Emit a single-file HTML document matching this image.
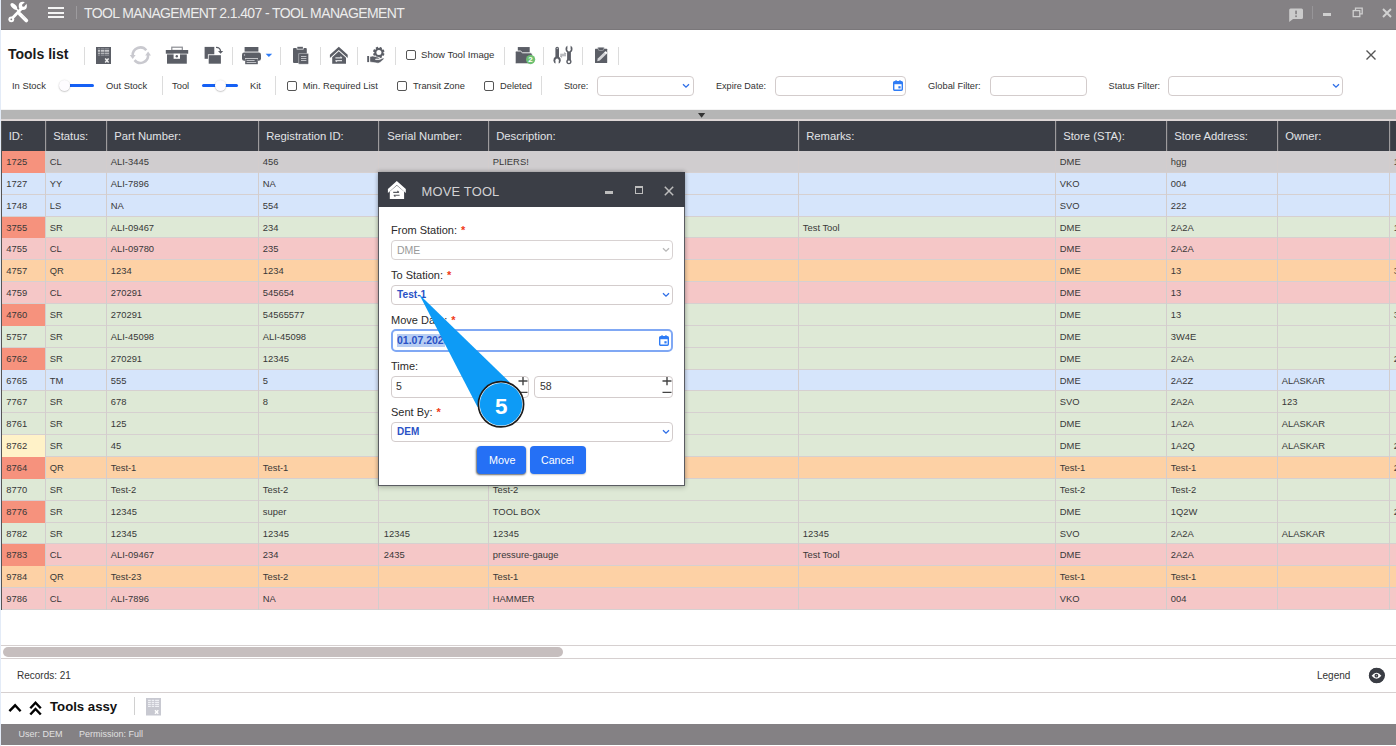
<!DOCTYPE html>
<html><head><meta charset="utf-8"><style>
*{box-sizing:border-box;margin:0;padding:0}
html,body{width:1396px;height:746px;overflow:hidden;background:#fff;font-family:"Liberation Sans", sans-serif;position:relative}
.ab{position:absolute}
.t{position:absolute;white-space:nowrap;line-height:1}
.sep{position:absolute;width:1px;background:#dcdcdc}
.cb{position:absolute;width:10px;height:10px;border:1.3px solid #555;border-radius:2px;background:#fff}
.inp{position:absolute;border:1px solid #d3cccc;border-radius:4px;background:#fff}
.hd{position:absolute;top:121px;height:30px;background:#3b3e46}
.cell{position:absolute;white-space:nowrap;font-size:9.4px;color:#383838;line-height:1}
</style></head><body>

<div class="ab" style="left:0;top:0;width:1px;height:746px;background:#e3ebf7"></div>
<div class="ab" style="left:1px;top:0;width:1395px;height:30px;background:#848184"></div>
<div class="ab" style="left:1px;top:29px;width:1395px;height:1px;background:#7a777a"></div>
<div class="t" style="left:84px;top:5px;font-size:14px;letter-spacing:-0.62px;color:#ececec;line-height:16px">TOOL MANAGEMENT 2.1.407 - TOOL MANAGEMENT</div>
<svg class="ab" style="left:4px;top:0px" width="30" height="26" viewBox="0 0 30 26"><ellipse cx="9.8" cy="6.3" rx="4.1" ry="2.1" transform="rotate(45 9.8 6.3)" fill="#fff"/><line x1="11" y1="7.5" x2="15" y2="11.5" stroke="#fff" stroke-width="1.6"/><line x1="15.8" y1="14" x2="22.3" y2="20.5" stroke="#fff" stroke-width="3.8" stroke-linecap="round"/><line x1="7.3" y1="19.3" x2="17.8" y2="8.2" stroke="#fff" stroke-width="2.8"/><circle cx="7.3" cy="19.3" r="2.9" fill="#fff"/><circle cx="7.3" cy="19.3" r="0.9" fill="#848184"/><circle cx="18.8" cy="5.9" r="4.1" fill="#fff"/><path d="M20.3 6.3L18.45 4.45L22.1 0.7L23.95 2.55Z" fill="#848184"/><circle cx="19.4" cy="5.4" r="1.3" fill="#848184"/><path d="M18 15.5L21 18.5" stroke="#ddd" stroke-width="0.7"/></svg>
<div class="ab" style="left:48px;top:7px;width:16px;height:2px;background:#f4f4f4"></div>
<div class="ab" style="left:48px;top:11.6px;width:16px;height:2px;background:#f4f4f4"></div>
<div class="ab" style="left:48px;top:16px;width:16px;height:2px;background:#f4f4f4"></div>
<div class="ab" style="left:76px;top:6px;width:1px;height:13px;background:#9d9b9e"></div>
<svg class="ab" style="left:1288px;top:7px" width="16" height="16" viewBox="0 0 16 16"><path d="M2.5 1.5H13.5Q15 1.5 15 3V10.5Q15 12 13.5 12H5L1.2 15V3Q1.2 1.5 2.5 1.5Z" fill="#cbcbcb"/><rect x="7.2" y="3.6" width="1.7" height="3.6" fill="#858386"/><rect x="7.2" y="8.4" width="1.7" height="1.7" fill="#858386"/></svg>
<div class="ab" style="left:1312px;top:6px;width:1px;height:13px;background:#979598"></div>
<div class="ab" style="left:1323px;top:13px;width:8px;height:3px;background:#cfcfcf"></div>
<svg class="ab" style="left:1352px;top:7px" width="12" height="11" viewBox="0 0 12 11"><path d="M3.5 3V1.2H10.2V6.8H8" fill="none" stroke="#cfcfcf" stroke-width="1.3"/><rect x="1.2" y="3.6" width="6.6" height="6" fill="none" stroke="#cfcfcf" stroke-width="1.3"/></svg>
<svg class="ab" style="left:1382px;top:8px" width="10" height="10" viewBox="0 0 10 10"><path d="M1 1L9 9M9 1L1 9" stroke="#d2d2d2" stroke-width="1.9"/></svg>
<div class="t" style="left:8px;top:46px;font-size:14px;font-weight:bold;color:#1b1b1b;line-height:16px">Tools list</div>
<div class="sep" style="left:84px;top:47px;height:18px"></div>
<div class="sep" style="left:232px;top:47px;height:18px"></div>
<div class="sep" style="left:280px;top:47px;height:18px"></div>
<div class="sep" style="left:320px;top:47px;height:18px"></div>
<div class="sep" style="left:357px;top:47px;height:18px"></div>
<div class="sep" style="left:395px;top:47px;height:18px"></div>
<div class="sep" style="left:504px;top:47px;height:18px"></div>
<div class="sep" style="left:543px;top:47px;height:18px"></div>
<div class="sep" style="left:582px;top:47px;height:18px"></div>
<div class="sep" style="left:618px;top:47px;height:18px"></div>
<svg class="ab" style="left:96px;top:47px" width="15" height="17" viewBox="0 0 15 17"><rect width="15" height="17" fill="#5b5e66"/><rect x="1.9" y="1.2" width="11.2" height="1.3" fill="#8d9096"/><rect x="1.9" y="3.2" width="11.2" height="1.4" fill="#e2e3e5"/><rect x="1.9" y="5.6" width="11.2" height="1.5" fill="#b3b5b9"/><rect x="1.9" y="7.6" width="11.2" height="1.2" fill="#8d9096"/><rect x="4.2" y="1" width="0.7" height="8" fill="#5b5e66"/><rect x="8.2" y="1" width="0.5" height="8" fill="#5b5e66"/><path d="M9.2 11.6L12.6 15.4M12.6 11.6L9.2 15.4" stroke="#f0f0f0" stroke-width="1.5"/></svg>
<svg class="ab" style="left:128px;top:44px" width="24" height="22" viewBox="0 0 24 22"><path d="M4.7 11.6A7.7 7.7 0 0 1 18.3 6.25" fill="none" stroke="#c9c9cf" stroke-width="2.5"/><path d="M20.1 10.8A7.7 7.7 0 0 1 6.5 16.15" fill="none" stroke="#c9c9cf" stroke-width="2.5"/><path d="M1.8 11H7.6L4.7 15Z" fill="#c9c9cf"/><path d="M17.2 11.4H23L20.1 7.4Z" fill="#c9c9cf"/></svg>
<svg class="ab" style="left:165px;top:46px" width="24" height="18" viewBox="0 0 24 18"><rect x="6.8" y="1.2" width="10.5" height="3.2" fill="none" stroke="#8a8c92" stroke-width="1.2"/><rect x="0.8" y="4" width="22.4" height="3.7" fill="#5b5e66"/><rect x="2" y="8.4" width="19.8" height="9.3" fill="#5b5e66"/><rect x="8.6" y="7.7" width="6.4" height="5.1" fill="#fff"/><circle cx="11.8" cy="10.3" r="1.2" fill="#5b5e66"/></svg>
<svg class="ab" style="left:204px;top:46px" width="20" height="18" viewBox="0 0 20 18"><rect x="0.6" y="0.9" width="9.7" height="11.9" fill="#5b5e66"/><rect x="3.9" y="8.3" width="13.6" height="9.7" fill="#fff"/><rect x="4.7" y="9.2" width="12.2" height="8.5" fill="#5b5e66"/><path d="M12 1.3Q16.4 1.3 16.6 5.4" fill="none" stroke="#5b5e66" stroke-width="1.3"/><path d="M14 5L19.2 5L16.6 7.8Z" fill="#5b5e66"/></svg>
<svg class="ab" style="left:242px;top:46px" width="32" height="19" viewBox="0 0 32 19"><rect x="2.6" y="1" width="13.8" height="4.6" fill="#5b5e66"/><rect x="0" y="6.6" width="19" height="8.2" rx="2.2" fill="#5b5e66"/><rect x="3" y="12.2" width="13" height="6" fill="#fff"/><rect x="3.2" y="12.8" width="12.6" height="5.4" fill="#5b5e66"/><g fill="#c9cbd0"><rect x="4.6" y="14" width="8" height="0.9"/><rect x="4.6" y="16" width="9.6" height="0.9"/></g><circle cx="2.5" cy="9" r="0.7" fill="#c9cbd0"/><path d="M23.6 7.8H30.2L26.9 11Z" fill="#2f7cf6"/></svg>
<svg class="ab" style="left:292px;top:46px" width="18" height="19" viewBox="0 0 18 19"><rect x="1" y="2" width="13.8" height="15" rx="1" fill="#5b5e66"/><rect x="4.6" y="0.3" width="7" height="3.2" rx="0.6" fill="#fff"/><rect x="5.3" y="0.8" width="5.6" height="2" fill="#5b5e66"/><rect x="6.3" y="7.2" width="10.2" height="11" rx="0.6" fill="#a9abb0"/><rect x="7.1" y="8" width="9" height="9.8" rx="0.5" fill="#5b5e66"/><g fill="#c9cbd0"><rect x="9" y="10" width="5.4" height="0.9"/><rect x="9" y="12" width="5.4" height="0.9"/><rect x="9" y="14" width="5.4" height="0.9"/></g></svg>
<svg class="ab" style="left:329px;top:46px" width="20" height="19" viewBox="0 0 20 19"><path d="M0.9 8.8L9.8 0.8L18.7 8.8V12L9.8 4L0.9 12Z" fill="#5b5e66"/><path d="M3.2 17.7V11.3L9.8 5.3L17 11.8V17.7Z" fill="#5b5e66"/><path d="M6.4 11.9H13M11.4 10.6L13 11.9M13 14.6H6.4M8 15.9L6.4 14.6" stroke="#dcdde0" stroke-width="1.1"/></svg>
<svg class="ab" style="left:364px;top:44px" width="24" height="22" viewBox="0 0 24 22"><rect x="13.65" y="2.95" width="2.5" height="11.6" rx="0.5" transform="rotate(22.5 14.9 8.6)" fill="#5b5e66"/><rect x="13.65" y="2.95" width="2.5" height="11.6" rx="0.5" transform="rotate(67.5 14.9 8.6)" fill="#5b5e66"/><rect x="13.65" y="2.95" width="2.5" height="11.6" rx="0.5" transform="rotate(112.5 14.9 8.6)" fill="#5b5e66"/><rect x="13.65" y="2.95" width="2.5" height="11.6" rx="0.5" transform="rotate(157.5 14.9 8.6)" fill="#5b5e66"/><circle cx="14.9" cy="8.6" r="4.5" fill="#5b5e66"/><circle cx="14.9" cy="8.6" r="2.5" fill="#fff"/><rect x="3.2" y="12" width="1.8" height="6.1" fill="#5b5e66"/><path d="M5.8 12.6Q8.5 11.6 11.2 12.4L14.9 13.6Q16 14.2 15.2 15L11.6 15L11.6 15.6L15.6 15.6L19 14Q20.6 13.6 20 15L16 18.6Q14.6 19.4 12.8 19.1L5.8 18Z" fill="#5b5e66" stroke="#fff" stroke-width="0.6"/></svg>
<div class="cb" style="left:406px;top:50px"></div>
<div class="t" style="left:421px;top:49px;font-size:9.6px;color:#333;line-height:12px">Show Tool Image</div>
<svg class="ab" style="left:514px;top:46px" width="22" height="19" viewBox="0 0 22 19"><rect x="3.8" y="1.05" width="11.9" height="7" fill="#5b5e66"/><path d="M1.2 6.4Q1.2 5 2.6 5H6.4L8.6 6.8H16.8Q18.3 6.8 18.3 8.3V16.4Q18.3 17.8 16.9 17.8H2.6Q1.2 17.8 1.2 16.4Z" fill="#5b5e66" stroke="#fff" stroke-width="0.9"/><circle cx="16.6" cy="13.6" r="4.6" fill="#6ec172"/><text x="16.6" y="16.4" font-family="Liberation Sans" font-weight="bold" font-size="8" fill="#fff" text-anchor="middle">2</text></svg>
<svg class="ab" style="left:550px;top:44px" width="26" height="22" viewBox="0 0 26 22"><rect x="5.4" y="2.8" width="3.6" height="13" rx="1.8" fill="#5b5e66"/><circle cx="7.2" cy="4.5" r="0.65" fill="#c9cbd0"/><circle cx="7.1" cy="16.2" r="3.6" fill="#5b5e66"/><rect x="5.5" y="16" width="3.2" height="5" fill="#fff"/><circle cx="7.1" cy="16.1" r="1.6" fill="#fff"/><rect x="17.1" y="5" width="3.8" height="12" fill="#5b5e66"/><circle cx="19" cy="4.9" r="3.5" fill="#5b5e66"/><rect x="17.4" y="0" width="3.2" height="5.8" fill="#fff"/><circle cx="19" cy="5.8" r="1.6" fill="#fff"/><circle cx="18.9" cy="17.6" r="2.6" fill="#5b5e66"/><circle cx="18.9" cy="17.8" r="1.2" fill="#fff"/><path d="M10.2 10.2H16M14.2 8.6L16 10.2M16 11.8H10.2M12 13.4L10.2 11.8" stroke="#a3a5aa" stroke-width="1.1"/></svg>
<svg class="ab" style="left:594px;top:46px" width="15" height="18" viewBox="0 0 15 18"><rect x="1" y="2.8" width="12.2" height="14.1" rx="0.5" fill="#5b5e66"/><path d="M3.6 1.2H10.3V2.6Q10.3 4.8 8.2 4.8H5.7Q3.6 4.8 3.6 2.6Z" fill="#a9abb0"/><path d="M4.4 1.8H9.5V2.7Q9.5 4 8.2 4H5.7Q4.4 4 4.4 2.7Z" fill="#5b5e66"/><path d="M3.2 15.2L3.8 12.6L10 6.4L12 8.4L5.8 14.6Z" fill="#d6d7da"/><path d="M10 6.4L11 5.4Q11.6 4.9 12.2 5.5L12.9 6.2Q13.4 6.8 12.9 7.4L12 8.4Z" fill="#fff"/></svg>
<svg class="ab" style="left:1366px;top:50px" width="10" height="10" viewBox="0 0 10 10"><path d="M0.5 0.5L9.5 9.5M9.5 0.5L0.5 9.5" stroke="#555" stroke-width="1.4"/></svg>
<div class="t" style="left:12px;top:80px;font-size:9.4px;color:#333;line-height:12px">In Stock</div>
<div class="ab" style="left:70px;top:84px;width:24px;height:3px;border-radius:0 2px 2px 0;background:#1560f5"></div>
<div class="ab" style="left:58.6px;top:80px;width:11.4px;height:11.4px;border-radius:50%;background:#fefcff;box-shadow:0 0.5px 1.5px rgba(0,0,0,.35)"></div>
<div class="t" style="left:106px;top:80px;font-size:9.4px;color:#333;line-height:12px">Out Stock</div>
<div class="sep" style="left:162px;top:76px;height:19px"></div>
<div class="t" style="left:172px;top:80px;font-size:9.4px;color:#333;line-height:12px">Tool</div>
<div class="ab" style="left:202px;top:84px;width:35.5px;height:3px;border-radius:2px;background:#1560f5"></div>
<div class="ab" style="left:214.5px;top:80px;width:11.4px;height:11.4px;border-radius:50%;background:#fefcff;box-shadow:0 0.5px 1.5px rgba(0,0,0,.35)"></div>
<div class="t" style="left:250px;top:80px;font-size:9.4px;color:#333;line-height:12px">Kit</div>
<div class="sep" style="left:275px;top:76px;height:19px"></div>
<div class="cb" style="left:287px;top:81px"></div>
<div class="t" style="left:302.8px;top:80px;font-size:9.3px;color:#333;line-height:12px">Min. Required List</div>
<div class="cb" style="left:397.4px;top:81px"></div>
<div class="t" style="left:413px;top:80px;font-size:9.3px;color:#333;line-height:12px">Transit Zone</div>
<div class="cb" style="left:484px;top:81px"></div>
<div class="t" style="left:500px;top:80px;font-size:9.3px;color:#333;line-height:12px">Deleted</div>
<div class="sep" style="left:541px;top:76px;height:19px"></div>
<div class="t" style="left:564px;top:80px;font-size:9.1px;color:#333;line-height:12px">Store:</div>
<div class="inp" style="left:597px;top:76px;width:97px;height:19.5px"></div>
<svg class="ab" style="left:681.5px;top:83px" width="8" height="6" viewBox="0 0 8 6"><path d="M1 1.2L4 4.2L7 1.2" fill="none" stroke="#2f6fe8" stroke-width="1.3"/></svg>
<div class="t" style="left:716px;top:80px;font-size:9.1px;color:#333;line-height:12px">Expire Date:</div>
<div class="inp" style="left:775px;top:75.5px;width:131px;height:20.5px"></div>
<svg class="ab" style="left:893px;top:80px" width="10" height="11" viewBox="0 0 10 11"><rect x="0.7" y="1.8" width="8.6" height="8.5" rx="1" fill="none" stroke="#2f7cf6" stroke-width="1.4"/><rect x="0.7" y="1.8" width="8.6" height="2.4" fill="#2f7cf6"/><rect x="2.4" y="0.2" width="1.3" height="2" fill="#2f7cf6"/><rect x="6.3" y="0.2" width="1.3" height="2" fill="#2f7cf6"/><rect x="5.4" y="6.2" width="2.2" height="2.2" fill="#2f7cf6"/></svg>
<div class="t" style="left:928px;top:80px;font-size:9.3px;color:#333;line-height:12px">Global Filter:</div>
<div class="inp" style="left:990px;top:75.6px;width:97px;height:20px"></div>
<div class="t" style="left:1108.6px;top:80px;font-size:9.2px;color:#333;line-height:12px">Status Filter:</div>
<div class="inp" style="left:1168px;top:75.6px;width:175px;height:20.8px"></div>
<svg class="ab" style="left:1331.5px;top:83px" width="8" height="6" viewBox="0 0 8 6"><path d="M1 1.2L4 4.2L7 1.2" fill="none" stroke="#2f6fe8" stroke-width="1.3"/></svg>
<div class="ab" style="left:1px;top:108.5px;width:1395px;height:2px;background:linear-gradient(#fff,#cfcfcf)"></div>
<div class="ab" style="left:1px;top:110px;width:1395px;height:9px;background:#b5b5b5"></div>
<div class="ab" style="left:1px;top:119px;width:1395px;height:2px;background:#ddd6d6"></div>
<svg class="ab" style="left:698px;top:113px" width="8" height="5"><path d="M0 0H7.2L3.6 4.8Z" fill="#333"/></svg>
<div class="ab" style="left:1px;top:121px;width:1395px;height:30px;background:#3b3e46"></div>
<div class="t" style="left:8.7px;top:129.6px;font-size:11.25px;color:#e2e4e7;line-height:13px">ID:</div>
<div class="ab" style="left:45px;top:121px;width:1px;height:30px;background:#9d9b9d"></div>
<div class="ab" style="left:46px;top:121px;width:1px;height:30px;background:#4a4c53"></div>
<div class="t" style="left:53.2px;top:129.6px;font-size:11.25px;color:#e2e4e7;line-height:13px">Status:</div>
<div class="ab" style="left:106px;top:121px;width:1px;height:30px;background:#9d9b9d"></div>
<div class="ab" style="left:107px;top:121px;width:1px;height:30px;background:#4a4c53"></div>
<div class="t" style="left:114.2px;top:129.6px;font-size:11.25px;color:#e2e4e7;line-height:13px">Part Number:</div>
<div class="ab" style="left:258px;top:121px;width:1px;height:30px;background:#9d9b9d"></div>
<div class="ab" style="left:259px;top:121px;width:1px;height:30px;background:#4a4c53"></div>
<div class="t" style="left:266.2px;top:129.6px;font-size:11.25px;color:#e2e4e7;line-height:13px">Registration ID:</div>
<div class="ab" style="left:378px;top:121px;width:1px;height:30px;background:#9d9b9d"></div>
<div class="ab" style="left:379px;top:121px;width:1px;height:30px;background:#4a4c53"></div>
<div class="t" style="left:387.2px;top:129.6px;font-size:11.25px;color:#e2e4e7;line-height:13px">Serial Number:</div>
<div class="ab" style="left:488px;top:121px;width:1px;height:30px;background:#9d9b9d"></div>
<div class="ab" style="left:489px;top:121px;width:1px;height:30px;background:#4a4c53"></div>
<div class="t" style="left:496.2px;top:129.6px;font-size:11.25px;color:#e2e4e7;line-height:13px">Description:</div>
<div class="ab" style="left:798px;top:121px;width:1px;height:30px;background:#9d9b9d"></div>
<div class="ab" style="left:799px;top:121px;width:1px;height:30px;background:#4a4c53"></div>
<div class="t" style="left:806.2px;top:129.6px;font-size:11.25px;color:#e2e4e7;line-height:13px">Remarks:</div>
<div class="ab" style="left:1055px;top:121px;width:1px;height:30px;background:#9d9b9d"></div>
<div class="ab" style="left:1056px;top:121px;width:1px;height:30px;background:#4a4c53"></div>
<div class="t" style="left:1063.2px;top:129.6px;font-size:11.25px;color:#e2e4e7;line-height:13px">Store (STA):</div>
<div class="ab" style="left:1166px;top:121px;width:1px;height:30px;background:#9d9b9d"></div>
<div class="ab" style="left:1167px;top:121px;width:1px;height:30px;background:#4a4c53"></div>
<div class="t" style="left:1174.2px;top:129.6px;font-size:11.25px;color:#e2e4e7;line-height:13px">Store Address:</div>
<div class="ab" style="left:1277px;top:121px;width:1px;height:30px;background:#9d9b9d"></div>
<div class="ab" style="left:1278px;top:121px;width:1px;height:30px;background:#4a4c53"></div>
<div class="t" style="left:1285.2px;top:129.6px;font-size:11.25px;color:#e2e4e7;line-height:13px">Owner:</div>
<div class="ab" style="left:1389px;top:121px;width:1px;height:30px;background:#9d9b9d"></div>
<div class="ab" style="left:1390px;top:121px;width:1px;height:30px;background:#4a4c53"></div>
<div class="ab" style="left:1px;top:151px;width:1395px;height:22px;background:#d0cdcf;border-bottom:1px solid #d6d0d0"></div>
<div class="ab" style="left:2px;top:151px;width:43px;height:22px;background:#f6927d"></div>
<div class="cell" style="left:6.3px;top:155.6px;line-height:11px">1725</div>
<div class="cell" style="left:49.8px;top:155.6px;line-height:11px">CL</div>
<div class="cell" style="left:110.8px;top:155.6px;line-height:11px">ALI-3445</div>
<div class="cell" style="left:262.8px;top:155.6px;line-height:11px">456</div>
<div class="cell" style="left:492.8px;top:155.6px;line-height:11px">PLIERS!</div>
<div class="cell" style="left:1059.8px;top:155.6px;line-height:11px">DME</div>
<div class="cell" style="left:1170.8px;top:155.6px;line-height:11px">hgg</div>
<div class="cell" style="left:1393.8px;top:155.6px;line-height:11px">1</div>
<div class="ab" style="left:1px;top:173px;width:1395px;height:22px;background:#d6e5fb;border-bottom:1px solid #d6d0d0"></div>
<div class="cell" style="left:6.3px;top:177.6px;line-height:11px">1727</div>
<div class="cell" style="left:49.8px;top:177.6px;line-height:11px">YY</div>
<div class="cell" style="left:110.8px;top:177.6px;line-height:11px">ALI-7896</div>
<div class="cell" style="left:262.8px;top:177.6px;line-height:11px">NA</div>
<div class="cell" style="left:1059.8px;top:177.6px;line-height:11px">VKO</div>
<div class="cell" style="left:1170.8px;top:177.6px;line-height:11px">004</div>
<div class="ab" style="left:1px;top:195px;width:1395px;height:22px;background:#d6e5fb;border-bottom:1px solid #d6d0d0"></div>
<div class="cell" style="left:6.3px;top:199.6px;line-height:11px">1748</div>
<div class="cell" style="left:49.8px;top:199.6px;line-height:11px">LS</div>
<div class="cell" style="left:110.8px;top:199.6px;line-height:11px">NA</div>
<div class="cell" style="left:262.8px;top:199.6px;line-height:11px">554</div>
<div class="cell" style="left:1059.8px;top:199.6px;line-height:11px">SVO</div>
<div class="cell" style="left:1170.8px;top:199.6px;line-height:11px">222</div>
<div class="ab" style="left:1px;top:217px;width:1395px;height:21px;background:#dee9d6;border-bottom:1px solid #d6d0d0"></div>
<div class="ab" style="left:2px;top:217px;width:43px;height:21px;background:#f6927d"></div>
<div class="cell" style="left:6.3px;top:221.6px;line-height:11px">3755</div>
<div class="cell" style="left:49.8px;top:221.6px;line-height:11px">SR</div>
<div class="cell" style="left:110.8px;top:221.6px;line-height:11px">ALI-09467</div>
<div class="cell" style="left:262.8px;top:221.6px;line-height:11px">234</div>
<div class="cell" style="left:802.8px;top:221.6px;line-height:11px">Test Tool</div>
<div class="cell" style="left:1059.8px;top:221.6px;line-height:11px">DME</div>
<div class="cell" style="left:1170.8px;top:221.6px;line-height:11px">2A2A</div>
<div class="cell" style="left:1393.8px;top:221.6px;line-height:11px">1</div>
<div class="ab" style="left:1px;top:238px;width:1395px;height:22px;background:#f5c7c7;border-bottom:1px solid #d6d0d0"></div>
<div class="cell" style="left:6.3px;top:242.6px;line-height:11px">4755</div>
<div class="cell" style="left:49.8px;top:242.6px;line-height:11px">CL</div>
<div class="cell" style="left:110.8px;top:242.6px;line-height:11px">ALI-09780</div>
<div class="cell" style="left:262.8px;top:242.6px;line-height:11px">235</div>
<div class="cell" style="left:1059.8px;top:242.6px;line-height:11px">DME</div>
<div class="cell" style="left:1170.8px;top:242.6px;line-height:11px">2A2A</div>
<div class="ab" style="left:1px;top:260px;width:1395px;height:22px;background:#fdd1a5;border-bottom:1px solid #d6d0d0"></div>
<div class="cell" style="left:6.3px;top:264.6px;line-height:11px">4757</div>
<div class="cell" style="left:49.8px;top:264.6px;line-height:11px">QR</div>
<div class="cell" style="left:110.8px;top:264.6px;line-height:11px">1234</div>
<div class="cell" style="left:262.8px;top:264.6px;line-height:11px">1234</div>
<div class="cell" style="left:1059.8px;top:264.6px;line-height:11px">DME</div>
<div class="cell" style="left:1170.8px;top:264.6px;line-height:11px">13</div>
<div class="cell" style="left:1393.8px;top:264.6px;line-height:11px">3</div>
<div class="ab" style="left:1px;top:282px;width:1395px;height:22px;background:#f5c7c7;border-bottom:1px solid #d6d0d0"></div>
<div class="cell" style="left:6.3px;top:286.6px;line-height:11px">4759</div>
<div class="cell" style="left:49.8px;top:286.6px;line-height:11px">CL</div>
<div class="cell" style="left:110.8px;top:286.6px;line-height:11px">270291</div>
<div class="cell" style="left:262.8px;top:286.6px;line-height:11px">545654</div>
<div class="cell" style="left:1059.8px;top:286.6px;line-height:11px">DME</div>
<div class="cell" style="left:1170.8px;top:286.6px;line-height:11px">13</div>
<div class="ab" style="left:1px;top:304px;width:1395px;height:22px;background:#dee9d6;border-bottom:1px solid #d6d0d0"></div>
<div class="ab" style="left:2px;top:304px;width:43px;height:22px;background:#f6927d"></div>
<div class="cell" style="left:6.3px;top:308.6px;line-height:11px">4760</div>
<div class="cell" style="left:49.8px;top:308.6px;line-height:11px">SR</div>
<div class="cell" style="left:110.8px;top:308.6px;line-height:11px">270291</div>
<div class="cell" style="left:262.8px;top:308.6px;line-height:11px">54565577</div>
<div class="cell" style="left:1059.8px;top:308.6px;line-height:11px">DME</div>
<div class="cell" style="left:1170.8px;top:308.6px;line-height:11px">13</div>
<div class="cell" style="left:1393.8px;top:308.6px;line-height:11px">3</div>
<div class="ab" style="left:1px;top:326px;width:1395px;height:22px;background:#dee9d6;border-bottom:1px solid #d6d0d0"></div>
<div class="cell" style="left:6.3px;top:330.6px;line-height:11px">5757</div>
<div class="cell" style="left:49.8px;top:330.6px;line-height:11px">SR</div>
<div class="cell" style="left:110.8px;top:330.6px;line-height:11px">ALI-45098</div>
<div class="cell" style="left:262.8px;top:330.6px;line-height:11px">ALI-45098</div>
<div class="cell" style="left:1059.8px;top:330.6px;line-height:11px">DME</div>
<div class="cell" style="left:1170.8px;top:330.6px;line-height:11px">3W4E</div>
<div class="ab" style="left:1px;top:348px;width:1395px;height:22px;background:#dee9d6;border-bottom:1px solid #d6d0d0"></div>
<div class="ab" style="left:2px;top:348px;width:43px;height:22px;background:#f6927d"></div>
<div class="cell" style="left:6.3px;top:352.6px;line-height:11px">6762</div>
<div class="cell" style="left:49.8px;top:352.6px;line-height:11px">SR</div>
<div class="cell" style="left:110.8px;top:352.6px;line-height:11px">270291</div>
<div class="cell" style="left:262.8px;top:352.6px;line-height:11px">12345</div>
<div class="cell" style="left:1059.8px;top:352.6px;line-height:11px">DME</div>
<div class="cell" style="left:1170.8px;top:352.6px;line-height:11px">2A2A</div>
<div class="cell" style="left:1393.8px;top:352.6px;line-height:11px">2</div>
<div class="ab" style="left:1px;top:370px;width:1395px;height:21px;background:#d6e5fb;border-bottom:1px solid #d6d0d0"></div>
<div class="cell" style="left:6.3px;top:374.6px;line-height:11px">6765</div>
<div class="cell" style="left:49.8px;top:374.6px;line-height:11px">TM</div>
<div class="cell" style="left:110.8px;top:374.6px;line-height:11px">555</div>
<div class="cell" style="left:262.8px;top:374.6px;line-height:11px">5</div>
<div class="cell" style="left:1059.8px;top:374.6px;line-height:11px">DME</div>
<div class="cell" style="left:1170.8px;top:374.6px;line-height:11px">2A2Z</div>
<div class="cell" style="left:1281.8px;top:374.6px;line-height:11px">ALASKAR</div>
<div class="ab" style="left:1px;top:391px;width:1395px;height:22px;background:#dee9d6;border-bottom:1px solid #d6d0d0"></div>
<div class="cell" style="left:6.3px;top:395.6px;line-height:11px">7767</div>
<div class="cell" style="left:49.8px;top:395.6px;line-height:11px">SR</div>
<div class="cell" style="left:110.8px;top:395.6px;line-height:11px">678</div>
<div class="cell" style="left:262.8px;top:395.6px;line-height:11px">8</div>
<div class="cell" style="left:1059.8px;top:395.6px;line-height:11px">SVO</div>
<div class="cell" style="left:1170.8px;top:395.6px;line-height:11px">2A2A</div>
<div class="cell" style="left:1281.8px;top:395.6px;line-height:11px">123</div>
<div class="ab" style="left:1px;top:413px;width:1395px;height:22px;background:#dee9d6;border-bottom:1px solid #d6d0d0"></div>
<div class="cell" style="left:6.3px;top:417.6px;line-height:11px">8761</div>
<div class="cell" style="left:49.8px;top:417.6px;line-height:11px">SR</div>
<div class="cell" style="left:110.8px;top:417.6px;line-height:11px">125</div>
<div class="cell" style="left:1059.8px;top:417.6px;line-height:11px">DME</div>
<div class="cell" style="left:1170.8px;top:417.6px;line-height:11px">1A2A</div>
<div class="cell" style="left:1281.8px;top:417.6px;line-height:11px">ALASKAR</div>
<div class="ab" style="left:1px;top:435px;width:1395px;height:22px;background:#dee9d6;border-bottom:1px solid #d6d0d0"></div>
<div class="ab" style="left:2px;top:435px;width:43px;height:22px;background:#fff2c8"></div>
<div class="cell" style="left:6.3px;top:439.6px;line-height:11px">8762</div>
<div class="cell" style="left:49.8px;top:439.6px;line-height:11px">SR</div>
<div class="cell" style="left:110.8px;top:439.6px;line-height:11px">45</div>
<div class="cell" style="left:1059.8px;top:439.6px;line-height:11px">DME</div>
<div class="cell" style="left:1170.8px;top:439.6px;line-height:11px">1A2Q</div>
<div class="cell" style="left:1281.8px;top:439.6px;line-height:11px">ALASKAR</div>
<div class="cell" style="left:1393.8px;top:439.6px;line-height:11px">2</div>
<div class="ab" style="left:1px;top:457px;width:1395px;height:22px;background:#fdd1a5;border-bottom:1px solid #d6d0d0"></div>
<div class="ab" style="left:2px;top:457px;width:43px;height:22px;background:#f6927d"></div>
<div class="cell" style="left:6.3px;top:461.6px;line-height:11px">8764</div>
<div class="cell" style="left:49.8px;top:461.6px;line-height:11px">QR</div>
<div class="cell" style="left:110.8px;top:461.6px;line-height:11px">Test-1</div>
<div class="cell" style="left:262.8px;top:461.6px;line-height:11px">Test-1</div>
<div class="cell" style="left:1059.8px;top:461.6px;line-height:11px">Test-1</div>
<div class="cell" style="left:1170.8px;top:461.6px;line-height:11px">Test-1</div>
<div class="cell" style="left:1393.8px;top:461.6px;line-height:11px">2</div>
<div class="ab" style="left:1px;top:479px;width:1395px;height:22px;background:#dee9d6;border-bottom:1px solid #d6d0d0"></div>
<div class="cell" style="left:6.3px;top:483.6px;line-height:11px">8770</div>
<div class="cell" style="left:49.8px;top:483.6px;line-height:11px">SR</div>
<div class="cell" style="left:110.8px;top:483.6px;line-height:11px">Test-2</div>
<div class="cell" style="left:262.8px;top:483.6px;line-height:11px">Test-2</div>
<div class="cell" style="left:492.8px;top:483.6px;line-height:11px">Test-2</div>
<div class="cell" style="left:1059.8px;top:483.6px;line-height:11px">Test-2</div>
<div class="cell" style="left:1170.8px;top:483.6px;line-height:11px">Test-2</div>
<div class="ab" style="left:1px;top:501px;width:1395px;height:22px;background:#dee9d6;border-bottom:1px solid #d6d0d0"></div>
<div class="ab" style="left:2px;top:501px;width:43px;height:22px;background:#f6927d"></div>
<div class="cell" style="left:6.3px;top:505.6px;line-height:11px">8776</div>
<div class="cell" style="left:49.8px;top:505.6px;line-height:11px">SR</div>
<div class="cell" style="left:110.8px;top:505.6px;line-height:11px">12345</div>
<div class="cell" style="left:262.8px;top:505.6px;line-height:11px">super</div>
<div class="cell" style="left:492.8px;top:505.6px;line-height:11px">TOOL BOX</div>
<div class="cell" style="left:1059.8px;top:505.6px;line-height:11px">DME</div>
<div class="cell" style="left:1170.8px;top:505.6px;line-height:11px">1Q2W</div>
<div class="cell" style="left:1393.8px;top:505.6px;line-height:11px">2</div>
<div class="ab" style="left:1px;top:523px;width:1395px;height:21px;background:#dee9d6;border-bottom:1px solid #d6d0d0"></div>
<div class="cell" style="left:6.3px;top:527.6px;line-height:11px">8782</div>
<div class="cell" style="left:49.8px;top:527.6px;line-height:11px">SR</div>
<div class="cell" style="left:110.8px;top:527.6px;line-height:11px">12345</div>
<div class="cell" style="left:262.8px;top:527.6px;line-height:11px">12345</div>
<div class="cell" style="left:383.8px;top:527.6px;line-height:11px">12345</div>
<div class="cell" style="left:492.8px;top:527.6px;line-height:11px">12345</div>
<div class="cell" style="left:802.8px;top:527.6px;line-height:11px">12345</div>
<div class="cell" style="left:1059.8px;top:527.6px;line-height:11px">SVO</div>
<div class="cell" style="left:1170.8px;top:527.6px;line-height:11px">2A2A</div>
<div class="cell" style="left:1281.8px;top:527.6px;line-height:11px">ALASKAR</div>
<div class="ab" style="left:1px;top:544px;width:1395px;height:22px;background:#f5c7c7;border-bottom:1px solid #d6d0d0"></div>
<div class="ab" style="left:2px;top:544px;width:43px;height:22px;background:#f6927d"></div>
<div class="cell" style="left:6.3px;top:548.6px;line-height:11px">8783</div>
<div class="cell" style="left:49.8px;top:548.6px;line-height:11px">CL</div>
<div class="cell" style="left:110.8px;top:548.6px;line-height:11px">ALI-09467</div>
<div class="cell" style="left:262.8px;top:548.6px;line-height:11px">234</div>
<div class="cell" style="left:383.8px;top:548.6px;line-height:11px">2435</div>
<div class="cell" style="left:492.8px;top:548.6px;line-height:11px">pressure-gauge</div>
<div class="cell" style="left:802.8px;top:548.6px;line-height:11px">Test Tool</div>
<div class="cell" style="left:1059.8px;top:548.6px;line-height:11px">DME</div>
<div class="cell" style="left:1170.8px;top:548.6px;line-height:11px">2A2A</div>
<div class="ab" style="left:1px;top:566px;width:1395px;height:22px;background:#fdd1a5;border-bottom:1px solid #d6d0d0"></div>
<div class="cell" style="left:6.3px;top:570.6px;line-height:11px">9784</div>
<div class="cell" style="left:49.8px;top:570.6px;line-height:11px">QR</div>
<div class="cell" style="left:110.8px;top:570.6px;line-height:11px">Test-23</div>
<div class="cell" style="left:262.8px;top:570.6px;line-height:11px">Test-2</div>
<div class="cell" style="left:492.8px;top:570.6px;line-height:11px">Test-1</div>
<div class="cell" style="left:1059.8px;top:570.6px;line-height:11px">Test-1</div>
<div class="cell" style="left:1170.8px;top:570.6px;line-height:11px">Test-1</div>
<div class="ab" style="left:1px;top:588px;width:1395px;height:22px;background:#f5c7c7;border-bottom:1px solid #d6d0d0"></div>
<div class="cell" style="left:6.3px;top:592.6px;line-height:11px">9786</div>
<div class="cell" style="left:49.8px;top:592.6px;line-height:11px">CL</div>
<div class="cell" style="left:110.8px;top:592.6px;line-height:11px">ALI-7896</div>
<div class="cell" style="left:262.8px;top:592.6px;line-height:11px">NA</div>
<div class="cell" style="left:492.8px;top:592.6px;line-height:11px">HAMMER</div>
<div class="cell" style="left:1059.8px;top:592.6px;line-height:11px">VKO</div>
<div class="cell" style="left:1170.8px;top:592.6px;line-height:11px">004</div>
<div class="ab" style="left:45px;top:151px;width:1px;height:459px;background:#d3cdcd"></div>
<div class="ab" style="left:106px;top:151px;width:1px;height:459px;background:#d3cdcd"></div>
<div class="ab" style="left:258px;top:151px;width:1px;height:459px;background:#d3cdcd"></div>
<div class="ab" style="left:378px;top:151px;width:1px;height:459px;background:#d3cdcd"></div>
<div class="ab" style="left:488px;top:151px;width:1px;height:459px;background:#d3cdcd"></div>
<div class="ab" style="left:798px;top:151px;width:1px;height:459px;background:#d3cdcd"></div>
<div class="ab" style="left:1055px;top:151px;width:1px;height:459px;background:#d3cdcd"></div>
<div class="ab" style="left:1166px;top:151px;width:1px;height:459px;background:#d3cdcd"></div>
<div class="ab" style="left:1277px;top:151px;width:1px;height:459px;background:#d3cdcd"></div>
<div class="ab" style="left:1389px;top:151px;width:1px;height:459px;background:#d3cdcd"></div>
<div class="ab" style="left:1px;top:121px;width:1px;height:489px;background:#555"></div>
<div class="ab" style="left:1px;top:645px;width:1395px;height:14px;border-top:1px solid #d6d0d0;border-bottom:1px solid #d6d0d0"></div>
<div class="ab" style="left:3px;top:647px;width:560px;height:10px;border-radius:5px;background:#c6bebe"></div>
<div class="t" style="left:17px;top:670px;font-size:10px;color:#333;line-height:12px">Records: 21</div>
<div class="t" style="left:1317px;top:670px;font-size:10px;color:#333;line-height:12px">Legend</div>
<div class="ab" style="left:1369px;top:667.5px;width:15.5px;height:15.5px;border-radius:50%;background:#3a3d44"></div>
<div class="ab" style="left:1px;top:692px;width:1395px;height:1px;background:#d6d0d0"></div>
<div class="t" style="left:50px;top:699px;font-size:13.2px;font-weight:bold;color:#111;line-height:15px">Tools assy</div>
<div class="sep" style="left:134px;top:697px;height:18px;background:#d0d0d0"></div>
<div class="ab" style="left:1px;top:724px;width:1395px;height:21px;background:#848184"></div>
<div class="t" style="left:18.5px;top:729px;font-size:9px;color:#e0e0e0;line-height:11px">User: DEM</div>
<div class="t" style="left:79px;top:729px;font-size:9px;color:#e0e0e0;line-height:11px">Permission: Full</div>
<svg class="ab" style="left:4px;top:694px" width="50" height="26" viewBox="0 0 50 26"><path d="M5.4 17.2L11.1 11.3L16.6 17.2" fill="none" stroke="#000" stroke-width="2.4"/><path d="M26.3 14.3L31.5 8.7L36.8 14.3M26.3 20.5L31.5 14.9L36.8 20.5" fill="none" stroke="#000" stroke-width="2.4"/></svg>
<svg class="ab" style="left:146px;top:698px" width="15" height="17.5" viewBox="0 0 15 17.5"><rect width="15" height="17.5" fill="#c8c9d1"/><g fill="#eef0f4"><rect x="2" y="1.8" width="11" height="1.2"/><rect x="2" y="3.8" width="11" height="1.2"/><rect x="2" y="5.8" width="11" height="1.2"/><rect x="2" y="7.8" width="11" height="1.2"/></g><g fill="#c8c9d1"><rect x="4.8" y="1" width="0.9" height="9"/><rect x="8.2" y="1" width="0.9" height="9"/></g><path d="M9 12.3L12.3 15.8M12.3 12.3L9 15.8" stroke="#fff" stroke-width="1.4"/></svg>
<svg class="ab" style="left:1368px;top:666.5px" width="17" height="17" viewBox="0 0 17 17"><circle cx="8.5" cy="8.5" r="7.7" fill="#3a3d44"/><path d="M3.6 8.7Q8.5 2.6 13.4 8.7Q8.5 14.6 3.6 8.7Z" fill="#fff"/><circle cx="8.4" cy="8.7" r="1.9" fill="#3a3d44"/><circle cx="8.4" cy="8.7" r="0.6" fill="#aaa"/></svg>
<div class="ab" style="left:378px;top:172px;width:307px;height:314px;background:#fff;border:1px solid #5a5c62;box-shadow:0 -1px 4px rgba(0,0,0,.22),0 2px 5px rgba(0,0,0,.17)"></div>
<div class="ab" style="left:378px;top:172px;width:307px;height:35px;background:#3b3e46"></div>
<svg class="ab" style="left:384px;top:176px" width="26" height="26" viewBox="0 0 26 26"><path d="M3.9 13L12.8 5.1L21.8 13V16.9L12.8 8.9L3.9 16.9Z" fill="#fff"/><path d="M5.8 22.9V15.6L12.8 9.6L20.1 15.6V22.9Z" fill="#fff"/><path d="M9.2 16.4H15M13.4 15L15 16.4M15.6 19.3H9.8M11.4 20.7L9.8 19.3" stroke="#5a5c62" stroke-width="1.1"/></svg>
<div class="t" style="left:421.5px;top:184px;font-size:12.9px;color:#d2d2d4;line-height:15px;letter-spacing:0.2px">MOVE TOOL</div>
<div class="ab" style="left:605px;top:191px;width:8px;height:3px;background:#bdbdbd"></div>
<div class="ab" style="left:635px;top:186px;width:8px;height:8px;border:1px solid #bdbdbd;border-top-width:2px"></div>
<svg class="ab" style="left:664px;top:186px" width="10" height="10" viewBox="0 0 10 10"><path d="M0.8 0.8L9.2 9.2M9.2 0.8L0.8 9.2" stroke="#bdbdbd" stroke-width="1.5"/></svg>
<div class="t" style="left:391px;top:224px;font-size:11px;color:#2a2a2a;line-height:13px">From Station:<span style="color:#f03a17;font-weight:bold;margin-left:4px">*</span></div>
<div class="inp" style="left:391px;top:240px;width:282px;height:20px;border-color:#d8d2d2"></div>
<div class="t" style="left:397px;top:244px;font-size:10.5px;color:#9a9a9a;line-height:12px">DME</div>
<svg class="ab" style="left:661.5px;top:247px" width="8" height="6" viewBox="0 0 8 6"><path d="M1 1.2L4 4.2L7 1.2" fill="none" stroke="#b8b8b8" stroke-width="1.3"/></svg>
<div class="t" style="left:391px;top:269px;font-size:11px;color:#2a2a2a;line-height:13px">To Station:<span style="color:#f03a17;font-weight:bold;margin-left:4px">*</span></div>
<div class="inp" style="left:391px;top:284.5px;width:282px;height:20.5px;border-color:#d3cccc"></div>
<div class="t" style="left:397px;top:289px;font-size:10.2px;font-weight:bold;color:#2a52c6;line-height:12px">Test-1</div>
<svg class="ab" style="left:661.5px;top:292px" width="8" height="6" viewBox="0 0 8 6"><path d="M1 1.2L4 4.2L7 1.2" fill="none" stroke="#2f6fe8" stroke-width="1.3"/></svg>
<div class="t" style="left:391px;top:314px;font-size:11px;color:#2a2a2a;line-height:13px">Move Date:<span style="color:#f03a17;font-weight:bold;margin-left:4px">*</span></div>
<div class="inp" style="left:391px;top:329px;width:282px;height:22.5px;border:2px solid #80a8f4;border-radius:5px"></div>
<div class="ab" style="left:397px;top:333.5px;width:48px;height:13px;background:#b7cdf3"></div>
<div class="t" style="left:397px;top:334px;font-size:10.5px;font-weight:bold;color:#2a52c6;line-height:12px">01.07.2023</div>
<svg class="ab" style="left:659px;top:335px" width="10" height="11" viewBox="0 0 10 11"><rect x="0.7" y="1.8" width="8.6" height="8.5" rx="1" fill="none" stroke="#2f7cf6" stroke-width="1.4"/><rect x="0.7" y="1.8" width="8.6" height="2.4" fill="#2f7cf6"/><rect x="2.4" y="0.2" width="1.3" height="2" fill="#2f7cf6"/><rect x="6.3" y="0.2" width="1.3" height="2" fill="#2f7cf6"/><rect x="5.4" y="6.2" width="2.2" height="2.2" fill="#2f7cf6"/></svg>
<div class="t" style="left:391px;top:360px;font-size:11px;color:#2a2a2a;line-height:13px">Time:</div>
<div class="inp" style="left:391px;top:376px;width:138px;height:22px;border-color:#d3cccc"></div>
<div class="t" style="left:396px;top:379.5px;font-size:10.5px;color:#333;line-height:12px">5</div>
<div class="inp" style="left:534px;top:376px;width:139px;height:22px;border-color:#d3cccc"></div>
<div class="t" style="left:540px;top:379.5px;font-size:10.5px;color:#333;line-height:12px">58</div>
<svg class="ab" style="left:518px;top:376px" width="10" height="20" viewBox="0 0 10 20"><path d="M0.5 5H9.5M5 1V9.2M0.5 16.4H9.5" stroke="#444" stroke-width="1.4"/></svg>
<svg class="ab" style="left:662px;top:376px" width="10" height="20" viewBox="0 0 10 20"><path d="M0.5 5H9.5M5 1V9.2M0.5 16.4H9.5" stroke="#444" stroke-width="1.4"/></svg>
<div class="t" style="left:391px;top:406px;font-size:11px;color:#2a2a2a;line-height:13px">Sent By:<span style="color:#f03a17;font-weight:bold;margin-left:4px">*</span></div>
<div class="inp" style="left:391px;top:422px;width:282px;height:20px;border-color:#d3cccc"></div>
<div class="t" style="left:397px;top:426px;font-size:10px;font-weight:bold;color:#2a52c6;line-height:12px">DEM</div>
<svg class="ab" style="left:661.5px;top:429px" width="8" height="6" viewBox="0 0 8 6"><path d="M1 1.2L4 4.2L7 1.2" fill="none" stroke="#2f6fe8" stroke-width="1.3"/></svg>
<div class="ab" style="left:477px;top:446px;width:49px;height:28px;border-radius:4px;background:#2570f5;box-shadow:-0.5px 1px 2px rgba(0,0,0,.6)"></div>
<div class="t" style="left:489px;top:453.7px;font-size:10.8px;color:#fff;line-height:12px">Move</div>
<div class="ab" style="left:530px;top:446px;width:56px;height:28px;border-radius:4px;background:#2570f5;box-shadow:0 1px 1.5px rgba(0,0,0,.2)"></div>
<div class="t" style="left:541px;top:453.7px;font-size:10.6px;color:#fff;line-height:12px">Cancel</div>
<svg class="ab" style="left:0;top:0" width="1396" height="746" viewBox="0 0 1396 746"><path d="M419.3 294.5L509.5 382L501 404.3L477.5 407Z" fill="#0d9bf6"/><circle cx="501" cy="404.3" r="22.6" fill="#fff" stroke="#1c1c1c" stroke-width="1.7"/><circle cx="501" cy="404.3" r="21.2" fill="#0d9bf6"/><text x="501.3" y="414" font-family="Liberation Sans" font-weight="bold" font-size="22.4" fill="#fff" text-anchor="middle">5</text></svg>
</body></html>
